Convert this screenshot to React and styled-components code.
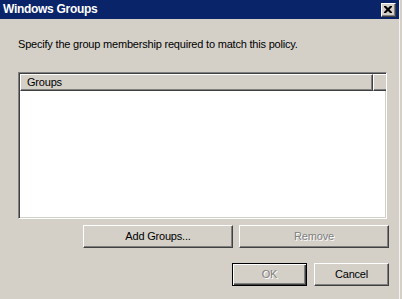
import React from "react"
import styled, { createGlobalStyle } from "styled-components"

const FACE = "#d4d0c8"
const SHADOW = "#808080"
const DARK = "#404040"

const GlobalStyle = createGlobalStyle`
  html, body {
    margin: 0;
    padding: 0;
    background: ${FACE};
  }
  body {
    font-family: "Liberation Sans", Arial, sans-serif;
    font-size: 11px;
    letter-spacing: -0.2px;
    color: #000;
  }
`

const Frame = styled.div`
  width: 402px;
  height: 299px;
  box-sizing: border-box;
  padding-right: 2px;
  background: ${FACE};
  overflow: hidden;
`

const Dialog = styled.div`
  height: 100%;
  border-right: 1px solid #f4f3ef;
  display: flex;
  flex-direction: column;
`

const TitleBar = styled.div`
  height: 19px;
  flex-shrink: 0;
  background: #0a246a;
  display: flex;
  align-items: center;
  justify-content: space-between;
  padding: 0 3px 0 3px;
`

const Title = styled.span`
  color: #fff;
  font-weight: bold;
  font-size: 12px;
  letter-spacing: -0.3px;
  line-height: 19px;
`

const CloseButton = styled.div`
  width: 15px;
  height: 14px;
  margin-top: 1px;
  box-sizing: border-box;
  background: ${FACE};
  border-top: 1px solid #fff;
  border-left: 1px solid #fff;
  border-right: 1px solid ${DARK};
  border-bottom: 1px solid ${DARK};
  box-shadow: inset -1px -1px 0 ${SHADOW};
  display: flex;
  align-items: center;
  justify-content: center;
  padding: 0 1px 1px 0;
`

const Body = styled.div`
  flex: 1;
  padding: 19px 11px 0 18px;
  display: flex;
  flex-direction: column;
`

const Prompt = styled.p`
  margin: 0;
  line-height: 13px;
  height: 13px;
`

const ListBox = styled.div`
  margin-top: 21px;
  width: 369px;
  height: 147px;
  box-sizing: border-box;
  background: #fff;
  border-top: 1px solid ${SHADOW};
  border-left: 1px solid ${SHADOW};
  border-right: 1px solid #fff;
  border-bottom: 1px solid #fff;
  box-shadow: inset 1px 1px 0 ${DARK}, inset -1px -1px 0 ${FACE};
  padding: 1px 0 1px 1px;
`

const HeaderRow = styled.div`
  display: flex;
  height: 17px;
`

const HeaderCell = styled.div`
  box-sizing: border-box;
  height: 17px;
  background: ${FACE};
  border-top: 1px solid #fff;
  border-left: 1px solid #fff;
  border-bottom: 1px solid ${DARK};
  border-right: ${({ $width }) => ($width ? `1px solid ${DARK}` : "none")};
  box-shadow: ${({ $width }) =>
    $width ? `inset -1px -1px 0 ${SHADOW}` : `inset 0 -1px 0 ${SHADOW}`};
  padding-left: 6px;
  line-height: 14px;
  width: ${({ $width }) => ($width ? `${$width}px` : "auto")};
  flex: ${({ $width }) => ($width ? "none" : 1)};
`

const ButtonRow = styled.div`
  display: flex;
  justify-content: flex-end;
  gap: ${({ $gap }) => $gap}px;
  margin-top: ${({ $top }) => $top}px;
  margin-right: -1px;
`

const Button = styled.div`
  width: ${({ $width }) => $width}px;
  height: 23px;
  box-sizing: border-box;
  background: ${FACE};
  border-top: 1px solid #fff;
  border-left: 1px solid #fff;
  border-right: 1px solid ${DARK};
  border-bottom: 1px solid ${DARK};
  box-shadow: inset -1px -1px 0 ${SHADOW};
  display: flex;
  align-items: center;
  justify-content: center;
  padding-bottom: 1px;
  color: ${({ $disabled }) => ($disabled ? SHADOW : "#000")};
  text-shadow: ${({ $disabled }) => ($disabled ? "1px 1px 0 #fff" : "none")};
  ${({ $default }) =>
    $default &&
    `
    border: 1px solid #000;
    box-shadow: inset 1px 1px 0 #fff, inset -1px -1px 0 ${DARK}, inset -2px -2px 0 ${SHADOW};
  `}
`

const CloseGlyph = () => (
  <svg width="8" height="7" viewBox="0 0 8 7">
    <path
      d="M0 0h2l2 2 2-2h2v1L5.5 3.5 8 6v1H6L4 5 2 7H0V6l2.5-2.5L0 1z"
      fill="#000"
    />
  </svg>
)

export default function App() {
  return (
    <>
      <GlobalStyle />
      <Frame>
        <Dialog>
          <TitleBar>
            <Title>Windows Groups</Title>
            <CloseButton>
              <CloseGlyph />
            </CloseButton>
          </TitleBar>
          <Body>
            <Prompt>Specify the group membership required to match this policy.</Prompt>
            <ListBox>
              <HeaderRow>
                <HeaderCell $width={353}>Groups</HeaderCell>
                <HeaderCell />
              </HeaderRow>
            </ListBox>
            <ButtonRow $gap={6} $top={6}>
              <Button $width={150}>Add Groups...</Button>
              <Button $width={150} $disabled>
                Remove
              </Button>
            </ButtonRow>
            <ButtonRow $gap={7} $top={15}>
              <Button $width={75} $disabled $default>
                OK
              </Button>
              <Button $width={75}>Cancel</Button>
            </ButtonRow>
          </Body>
        </Dialog>
      </Frame>
    </>
  )
}
